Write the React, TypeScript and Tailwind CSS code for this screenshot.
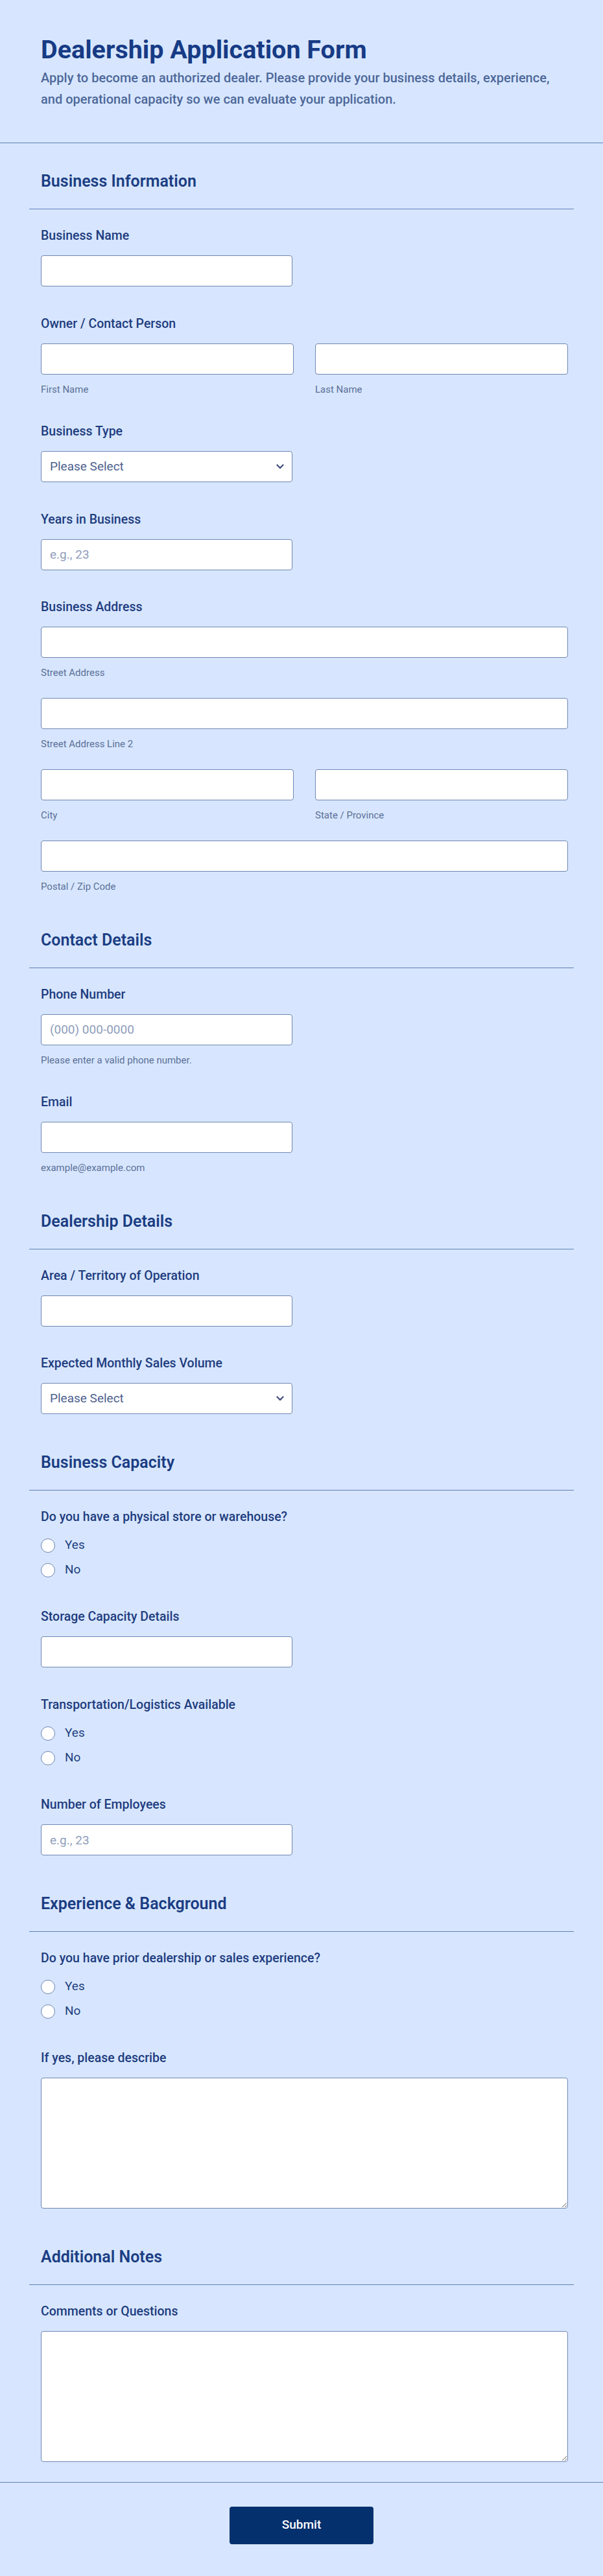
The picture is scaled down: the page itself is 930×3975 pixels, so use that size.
import React from 'react';

type Field =
  | { kind: 'text'; label: string; placeholder?: string; hint?: string }
  | { kind: 'name'; label: string }
  | { kind: 'select'; label: string }
  | { kind: 'address'; label: string }
  | { kind: 'radio'; label: string }
  | { kind: 'textarea'; label: string };

interface SectionData {
  title: string;
  fields: Field[];
}

const sections: SectionData[] = [
  {
    title: 'Business Information',
    fields: [
      { kind: 'text', label: 'Business Name' },
      { kind: 'name', label: 'Owner / Contact Person' },
      { kind: 'select', label: 'Business Type' },
      { kind: 'text', label: 'Years in Business', placeholder: 'e.g., 23' },
      { kind: 'address', label: 'Business Address' },
    ],
  },
  {
    title: 'Contact Details',
    fields: [
      { kind: 'text', label: 'Phone Number', placeholder: '(000) 000-0000', hint: 'Please enter a valid phone number.' },
      { kind: 'text', label: 'Email', hint: 'example@example.com' },
    ],
  },
  {
    title: 'Dealership Details',
    fields: [
      { kind: 'text', label: 'Area / Territory of Operation' },
      { kind: 'select', label: 'Expected Monthly Sales Volume' },
    ],
  },
  {
    title: 'Business Capacity',
    fields: [
      { kind: 'radio', label: 'Do you have a physical store or warehouse?' },
      { kind: 'text', label: 'Storage Capacity Details' },
      { kind: 'radio', label: 'Transportation/Logistics Available' },
      { kind: 'text', label: 'Number of Employees', placeholder: 'e.g., 23' },
    ],
  },
  {
    title: 'Experience & Background',
    fields: [
      { kind: 'radio', label: 'Do you have prior dealership or sales experience?' },
      { kind: 'textarea', label: 'If yes, please describe' },
    ],
  },
  {
    title: 'Additional Notes',
    fields: [{ kind: 'textarea', label: 'Comments or Questions' }],
  },
];

const inputCls =
  'block h-[48px] w-full rounded-[4px] border border-[#6f86b3] bg-white px-[13px] text-[19px] text-[#1e3c7e] placeholder:text-[#8e9dba] outline-none';

const Label = ({ children, mb = 'mb-[18px]' }: { children: React.ReactNode; mb?: string }) => (
  <div className={`${mb} text-[19.5px] font-medium leading-[24px] text-[#1e3c7e]`}>{children}</div>
);

const Sub = ({ children }: { children: React.ReactNode }) => (
  <div className="mt-[15px] text-[15px] leading-[16px] text-[#5b7097]">{children}</div>
);

const SubInput = ({ label }: { label: string }) => (
  <div>
    <input className={inputCls} />
    <Sub>{label}</Sub>
  </div>
);

const Select = () => (
  <div className="relative w-[388px]">
    <select className={`${inputCls} appearance-none text-[#4d5f8e]`} defaultValue="">
      <option value="">Please Select</option>
    </select>
    <svg
      className="pointer-events-none absolute right-[13px] top-1/2 -translate-y-1/2"
      width="12"
      height="8"
      viewBox="0 0 12 8"
      fill="none"
    >
      <path d="M1.5 1.5 6 6.2l4.5-4.7" stroke="#3f4c7e" strokeWidth="2.2" strokeLinecap="round" strokeLinejoin="round" />
    </svg>
  </div>
);

const Radio = ({ text }: { text: string }) => (
  <label className="flex h-[38px] items-center gap-[15px]">
    <span className="h-[22px] w-[22px] rounded-full border border-[#6f86b3] bg-white" />
    <span className="text-[19px] text-[#21407f]">{text}</span>
  </label>
);

const FieldView = ({ field }: { field: Field }) => {
  switch (field.kind) {
    case 'text':
      return (
        <div>
          <Label>{field.label}</Label>
          <div className="w-[388px]">
            <input className={inputCls} placeholder={field.placeholder} />
          </div>
          {field.hint && <Sub>{field.hint}</Sub>}
        </div>
      );
    case 'name':
      return (
        <div>
          <Label>{field.label}</Label>
          <div className="grid grid-cols-2 gap-x-[33px]">
            <SubInput label="First Name" />
            <SubInput label="Last Name" />
          </div>
        </div>
      );
    case 'select':
      return (
        <div>
          <Label>{field.label}</Label>
          <Select />
        </div>
      );
    case 'address':
      return (
        <div>
          <Label>{field.label}</Label>
          <div className="flex flex-col gap-[31px]">
            <SubInput label="Street Address" />
            <SubInput label="Street Address Line 2" />
            <div className="grid grid-cols-2 gap-x-[33px]">
              <SubInput label="City" />
              <SubInput label="State / Province" />
            </div>
            <SubInput label="Postal / Zip Code" />
          </div>
        </div>
      );
    case 'radio':
      return (
        <div>
          <Label mb="mb-[13px]">{field.label}</Label>
          <div className="-mb-[4px] flex flex-col">
            <Radio text="Yes" />
            <Radio text="No" />
          </div>
        </div>
      );
    case 'textarea':
      return (
        <div>
          <Label>{field.label}</Label>
          <textarea className="block h-[202px] w-full rounded-[4px] border border-[#6f86b3] bg-white px-[13px] py-[10px] text-[19px] outline-none" />
        </div>
      );
  }
};

const Section = ({ data }: { data: SectionData }) => (
  <section>
    <h2 className="border-b border-[#5f7fb6] pb-[27px] pl-[18px] text-[25px] font-semibold leading-[30px] text-[#1b3d83]">
      {data.title}
    </h2>
    <div className="flex flex-col gap-[45.5px] pl-[18px] pr-[9px] pt-[29px]">
      {data.fields.map((f) => (
        <FieldView key={f.label} field={f} />
      ))}
    </div>
  </section>
);

export default function App() {
  return (
    <div className="min-h-screen bg-[#d7e6fe] font-[family-name:Roboto,sans-serif]">
      <header className="border-b border-[#5f7fb6] px-[63px] pb-[50px] pt-[53px]">
        <h1 className="text-[39.5px] font-bold leading-[48px] text-[#173b85]">Dealership Application Form</h1>
        <p className="mt-[3px] text-[20px] font-medium leading-[33px] text-[#4d6799]">
          Apply to become an authorized dealer. Please provide your business details, experience, and operational
          capacity so we can evaluate your application.
        </p>
      </header>

      <div className="flex flex-col gap-[59.5px] px-[45px] pb-[31px] pt-[44px]">
        {sections.map((s) => (
          <Section key={s.title} data={s} />
        ))}
      </div>

      <div className="flex justify-center border-t border-[#5f7fb6] pb-[50px] pt-[37px]">
        <button className="h-[58px] w-[222px] rounded-[4px] bg-[#04306d] text-[19px] font-medium text-white">
          Submit
        </button>
      </div>
    </div>
  );
}
